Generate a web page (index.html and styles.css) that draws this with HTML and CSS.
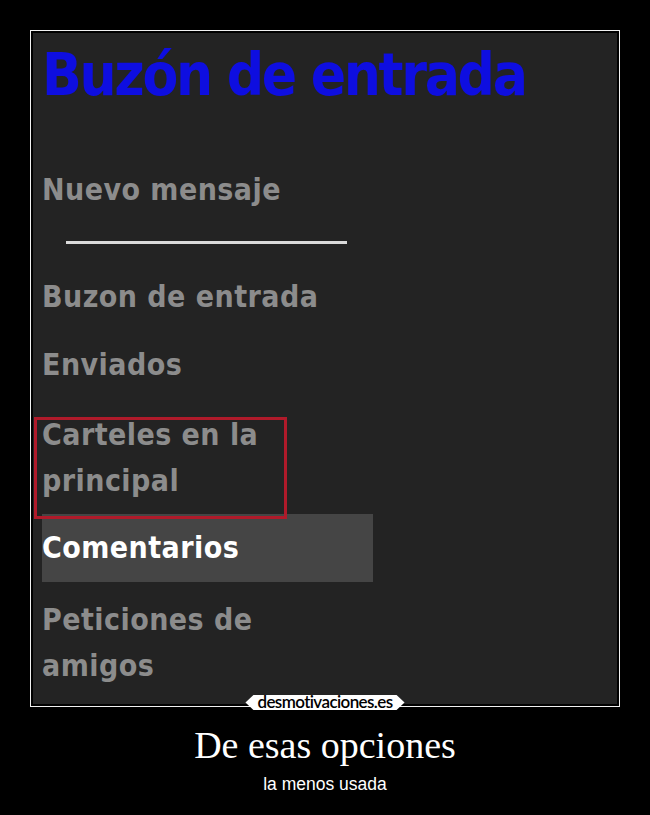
FILE: index.html
```html
<!DOCTYPE html>
<html lang="es">
<head>
    <meta charset="UTF-8">
    <title>De esas opciones</title>
    <link rel="stylesheet" href="styles.css">
</head>
<body>
    <div class="poster">
        <div class="frame">
            <div class="picture">
                <h1 class="inbox-title">Buzón de entrada</h1>

                <div class="menu">
                    <div class="menu-item new-message">Nuevo mensaje</div>
                    <div class="divider"></div>
                    <div class="menu-item">Buzon de entrada</div>
                    <div class="menu-item sent">Enviados</div>
                    <div class="menu-item marked">Carteles en la<br>principal</div>
                    <div class="menu-item active">Comentarios</div>
                    <div class="menu-item">Peticiones de<br>amigos</div>
                </div>
            </div>
        </div>

        <div class="brand">
            <span class="brand-pill">desmotivaciones.es</span>
        </div>

        <div class="caption">De esas opciones</div>
        <div class="subcaption">la menos usada</div>
    </div>
</body>
</html>
```

FILE: styles.css
```css
body {
    margin: 0;
    background: #000000;
    font-family: 'DejaVu Sans Condensed', 'DejaVu Sans', sans-serif;
}

.poster {
    width: 650px;
    height: 815px;
    padding-top: 30px;
    box-sizing: border-box;
}

.frame {
    margin-left: 30px;
    width: 590px;
    height: 677px;
    box-sizing: border-box;
    border: 1px solid #f0f0f0;
    padding: 2px;
    background: #000000;
}

.picture {
    height: 100%;
    background: #232323;
    padding-left: 9px;
    overflow: hidden;
}

.inbox-title {
    margin: 0;
    padding-top: 12px;
    color: #0e0ee0;
    font-family: 'DejaVu Sans Condensed', 'DejaVu Sans', sans-serif;
    font-weight: bold;
    font-size: 58px;
    line-height: 60px;
    letter-spacing: -2.3px;
}

.menu {
    margin-top: 62px;
    width: 331px;
}

.menu-item {
    color: #8c8c8c;
    font-weight: bold;
    font-size: 30px;
    line-height: 46px;
    letter-spacing: 0.45px;
    margin-bottom: 22px;
}

.new-message {
    margin-bottom: 28px;
}

.divider {
    height: 3px;
    width: 281px;
    margin: 0 0 30px 24px;
    background: #dadada;
}

.sent {
    margin-bottom: 24px;
}

.marked {
    position: relative;
    margin-bottom: 10px;
}

/* red highlight drawn over the item */
.marked::after {
    content: '';
    position: absolute;
    left: -8px;
    top: 5px;
    width: 247px;
    height: 96px;
    border: 3px solid #b01a2a;
    z-index: 1;
}

.active {
    background: #454545;
    color: #ffffff;
    padding: 11px 0;
    margin-bottom: 15px;
}

.brand {
    height: 0;
    display: flex;
    justify-content: center;
    position: relative;
    top: -12px;
}

.brand-pill {
    height: 15px;
    padding: 0 12px;
    background: #ffffff;
    clip-path: polygon(8px 0, calc(100% - 8px) 0, 100% 50%, calc(100% - 8px) 100%, 8px 100%, 0 50%);
    color: #000000;
    font-family: 'Lato', sans-serif;
    font-weight: 600;
    font-size: 17px;
    line-height: 14px;
    letter-spacing: -0.6px;
}

.caption {
    margin-top: 17px;
    text-align: center;
    color: #ffffff;
    font-family: 'Liberation Serif', serif;
    font-size: 38px;
    line-height: 42px;
}

.subcaption {
    margin-top: 8px;
    text-align: center;
    color: #ffffff;
    font-family: 'Liberation Sans', sans-serif;
    font-size: 17.5px;
}
```
